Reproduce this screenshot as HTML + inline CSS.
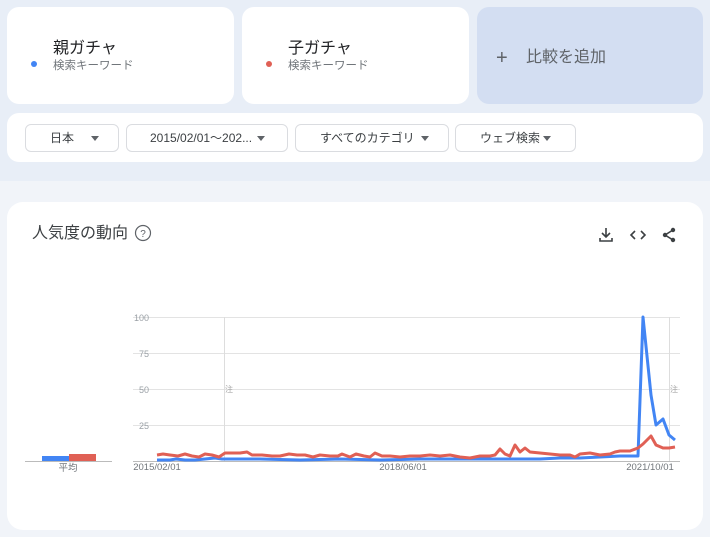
<!DOCTYPE html>
<html><head><meta charset="utf-8"><style>
*{box-sizing:border-box;margin:0;padding:0}
body{width:710px;height:537px;background:#f1f4f9;font-family:"Liberation Sans","Noto Sans CJK JP",sans-serif;position:relative;overflow:hidden;color:#202124}
.top{position:absolute;left:0;top:0;width:710px;height:181px;background:#e8eef7}
.card{position:absolute;background:#fff;border-radius:12px}
.kw{font-size:16px;line-height:1;position:absolute;left:46px;top:34px}
.sub{font-size:11.5px;line-height:1;color:#70757a;position:absolute;left:46px;top:54px}
.dot{position:absolute;left:24px;top:54px;width:6px;height:6px;border-radius:50%}
.btn{position:absolute;top:124px;height:28px;border:1px solid #dadce0;border-radius:6px;background:#fff;font-size:12px;line-height:26px;color:#3c4043}
.btn span{position:absolute;top:0}
.tri{position:absolute;top:11px;width:0;height:0;border-left:4px solid transparent;border-right:4px solid transparent;border-top:5px solid #5f6368}
</style></head><body>
<div class="top"></div>
<div class="card" style="left:7px;top:7px;width:227px;height:97px">
<div class="kw">親ガチャ</div><div class="sub">検索キーワード</div><div class="dot" style="background:#4285f4"></div></div>
<div class="card" style="left:242px;top:7px;width:227px;height:97px">
<div class="kw">子ガチャ</div><div class="sub">検索キーワード</div><div class="dot" style="background:#e06055"></div></div>
<div class="card" style="left:477px;top:7px;width:226px;height:97px;background:#d3def2">
<div style="position:absolute;left:19px;top:41px;font-size:20px;line-height:1;color:#5f6368">+</div>
<div style="position:absolute;left:49px;top:43px;font-size:16px;line-height:1;color:#5f6368">比較を追加</div></div>
<div class="card" style="left:7px;top:113px;width:696px;height:49px"></div>
<div class="btn" style="left:25px;width:94px"><span style="left:24px">日本</span><i class="tri" style="left:65px"></i></div>
<div class="btn" style="left:126px;width:162px"><span style="left:23px">2015/02/01〜202...</span><i class="tri" style="left:130px"></i></div>
<div class="btn" style="left:295px;width:154px"><span style="left:24px">すべてのカテゴリ</span><i class="tri" style="left:125px"></i></div>
<div class="btn" style="left:455px;width:121px"><span style="left:24px">ウェブ検索</span><i class="tri" style="left:87px"></i></div>

<div class="card" style="left:7px;top:202px;width:696px;height:328px;border-radius:16px">
<div style="position:absolute;left:25px;top:24px;font-size:16px;line-height:1;color:#3c4043">人気度の動向</div>
<svg style="position:absolute;left:127px;top:22px" width="18" height="18" viewBox="0 0 18 18"><circle cx="9" cy="9" r="7.5" fill="none" stroke="#5f6368" stroke-width="1.2"/><text x="9" y="13" font-size="10" text-anchor="middle" fill="#5f6368" font-family="Liberation Sans">?</text></svg>
<svg style="position:absolute;left:590px;top:24px" width="80" height="18" viewBox="0 0 80 18">
<g stroke="#3c4043" stroke-width="1.6" fill="none"><path d="M9 2v9M5 7l4 4 4-4M3 12v3h12v-3"/><path d="M38 5l-4 4 4 4M44 5l4 4-4 4"/><path d="M76 4L68 9l8 5"/></g>
<g fill="#3c4043"><circle cx="76" cy="4" r="2.2"/><circle cx="68" cy="9" r="2.2"/><circle cx="76" cy="14" r="2.2"/></g></svg>
</div>
<svg style="position:absolute;left:0;top:0" width="710" height="537">
<g stroke="#e3e3e3" stroke-width="1"><line x1="133" y1="317.5" x2="680" y2="317.5"/><line x1="133" y1="353.5" x2="680" y2="353.5"/><line x1="133" y1="389.5" x2="680" y2="389.5"/><line x1="133" y1="425.5" x2="680" y2="425.5"/></g>
<line x1="133" y1="461.5" x2="680" y2="461.5" stroke="#bbb"/>
<line x1="25" y1="461.5" x2="112" y2="461.5" stroke="#bbb"/>
<line x1="224.5" y1="317" x2="224.5" y2="461" stroke="#ddd"/><line x1="669.5" y1="317" x2="669.5" y2="461" stroke="#ddd"/>
<g font-size="9" fill="#9aa0a6" font-family="Liberation Sans" text-anchor="end"><text x="149" y="321">100</text><text x="149" y="357">75</text><text x="149" y="393">50</text><text x="149" y="429">25</text></g>
<g font-size="9.5" fill="#70757a" font-family="Liberation Sans,Noto Sans CJK JP" text-anchor="middle"><text x="157" y="470">2015/02/01</text><text x="403" y="470">2018/06/01</text><text x="650" y="470">2021/10/01</text><text x="68" y="471">平均</text></g>
<g font-size="8" fill="#aaa" font-family="Noto Sans CJK JP"><text x="225" y="392">注</text><text x="670" y="392">注</text></g>
<rect x="42" y="456" width="27" height="5" fill="#4285f4"/><rect x="69" y="454" width="27" height="7" fill="#db4437" opacity=".85"/>
<polyline fill="none" stroke="#4285f4" stroke-width="3" stroke-linejoin="round" points="157,460 170,460 176,459 185,460 195,460 205,459 215,458 222,459 235,459 260,459 300,460 340,459 380,460 420,459 460,459 500,459 540,459 560,458 580,458 600,457 620,456 638,456 643,317 651,395 656,425 663,419 669,435 675,440"/>
<polyline fill="none" stroke="#e06055" stroke-width="3" stroke-linejoin="round" points="157,455 163,454 170,455 178,456 185,454 192,456 199,457 205,454 212,455 219,457 225,453 240,453 247,452 252,455 262,455 272,456 280,456 289,454 297,455 305,455 313,457 320,455 330,456 338,456 342,454 350,457 356,454 364,456 370,457 375,453 382,456 390,456 400,457 410,456 420,456 430,455 440,456 450,455 460,457 470,458 480,456 490,456 495,455 500,449 505,454 510,456 515,445 520,452 525,448 530,452 540,453 550,454 560,455 570,455 575,457 580,454 590,453 600,455 610,454 615,452 620,451 630,451 638,448 643,444 651,436 656,445 663,448 669,448 675,447"/>
</svg>
</body></html>
